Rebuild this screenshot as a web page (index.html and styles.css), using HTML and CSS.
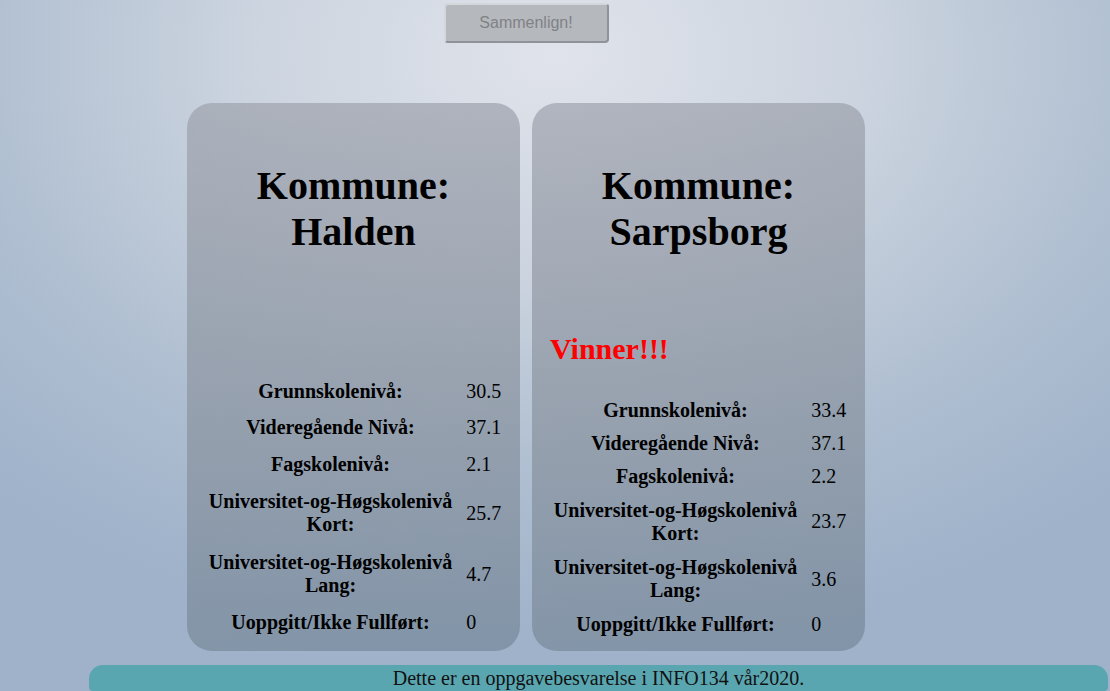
FILE: index.html
```html
<!DOCTYPE html>
<html lang="no">
<head>
<meta charset="utf-8">
<title>Sammenlign kommuner</title>
<link rel="stylesheet" href="styles.css">
</head>
<body>
<main class="page">
  <button class="compare-btn" type="button">Sammenlign!</button>
  <div class="cards">
    <section class="card">
      <h1 class="card-title">Kommune:<br>Halden</h1>
      <table class="stats">
        <tr class="row"><td class="label">Grunnskolenivå:</td><td class="value">30.5</td></tr>
        <tr class="row"><td class="label">Videregående Nivå:</td><td class="value">37.1</td></tr>
        <tr class="row"><td class="label">Fagskolenivå:</td><td class="value">2.1</td></tr>
        <tr class="row row--tall"><td class="label">Universitet-og-Høgskolenivå<br>Kort:</td><td class="value">25.7</td></tr>
        <tr class="row row--tall"><td class="label">Universitet-og-Høgskolenivå<br>Lang:</td><td class="value">4.7</td></tr>
        <tr class="row"><td class="label">Uoppgitt/Ikke Fullført:</td><td class="value">0</td></tr>
      </table>
    </section>
    <section class="card">
      <h1 class="card-title">Kommune:<br>Sarpsborg</h1>
      <p class="winner">Vinner!!!</p>
      <table class="stats stats--compact">
        <tr class="row"><td class="label">Grunnskolenivå:</td><td class="value">33.4</td></tr>
        <tr class="row"><td class="label">Videregående Nivå:</td><td class="value">37.1</td></tr>
        <tr class="row"><td class="label">Fagskolenivå:</td><td class="value">2.2</td></tr>
        <tr class="row row--tall"><td class="label">Universitet-og-Høgskolenivå<br>Kort:</td><td class="value">23.7</td></tr>
        <tr class="row row--tall"><td class="label">Universitet-og-Høgskolenivå<br>Lang:</td><td class="value">3.6</td></tr>
        <tr class="row"><td class="label">Uoppgitt/Ikke Fullført:</td><td class="value">0</td></tr>
      </table>
    </section>
  </div>
</main>
<footer class="footer">Dette er en oppgavebesvarelse i INFO134 vår2020.</footer>
</body>
</html>
```

FILE: styles.css
```css
html, body {
  margin: 0;
  height: 100%;
}

body {
  display: flex;
  flex-direction: column;
  overflow: hidden;
  font-family: "Liberation Serif", "Times New Roman", serif;
  font-size: 20px;
  color: #000;
  background: radial-gradient(ellipse 75% 85% at 50% 8%, #e0e3eb 0%, #cdd5e0 35%, #b0bfd1 70%, #9fb2ca 100%);
}

.page {
  display: flex;
  flex-direction: column;
  align-items: center;
  padding: 3px 58px 0 0;
}

.compare-btn {
  width: 165px;
  height: 40px;
  font-family: "Liberation Sans", Arial, sans-serif;
  font-size: 16px;
  color: #808286;
  background: #b5b8bd;
  border: 2px solid;
  border-color: #d3d6da #8f9297 #8f9297 #d3d6da;
  border-radius: 4px;
  padding: 0;
}

.cards {
  display: flex;
  gap: 12px;
  margin-top: 60px;
}

.card {
  width: 333px;
  height: 548px;
  box-sizing: border-box;
  padding: 0 14px 10px;
  border-radius: 25px;
  display: flex;
  flex-direction: column;
  background: linear-gradient(175deg, rgba(160, 164, 174, 0.72) 0%, rgba(140, 150, 163, 0.78) 60%, rgba(120, 138, 156, 0.75) 100%);
}

.card-title {
  margin: 60px 0 0;
  font-size: 40px;
  line-height: 46px;
  font-weight: bold;
  text-align: center;
}

.winner {
  margin: auto 0 28px 4px;
  color: #ff0000;
  font-size: 30px;
  line-height: 34px;
  font-weight: bold;
}

.stats {
  margin: auto auto 0;
  border-collapse: collapse;
}

.card .winner + .stats {
  margin-top: 0;
}

.row {
  height: 36.5px;
}

.row--tall {
  height: 61px;
}

.stats--compact .row {
  height: 33px;
}

.stats--compact .row--tall {
  height: 57.5px;
}

.label {
  padding: 0 4px;
  font-weight: bold;
  text-align: center;
  line-height: 23px;
  vertical-align: middle;
}

.value {
  padding: 0 0 0 10px;
  width: 36px;
  vertical-align: middle;
  line-height: 23px;
}

.footer {
  margin: 14px 2px 0 89px;
  height: 26px;
  line-height: 26px;
  text-align: center;
  background: #5aa6b0;
  color: #111;
  border-radius: 14px 14px 4px 4px;
}
```
